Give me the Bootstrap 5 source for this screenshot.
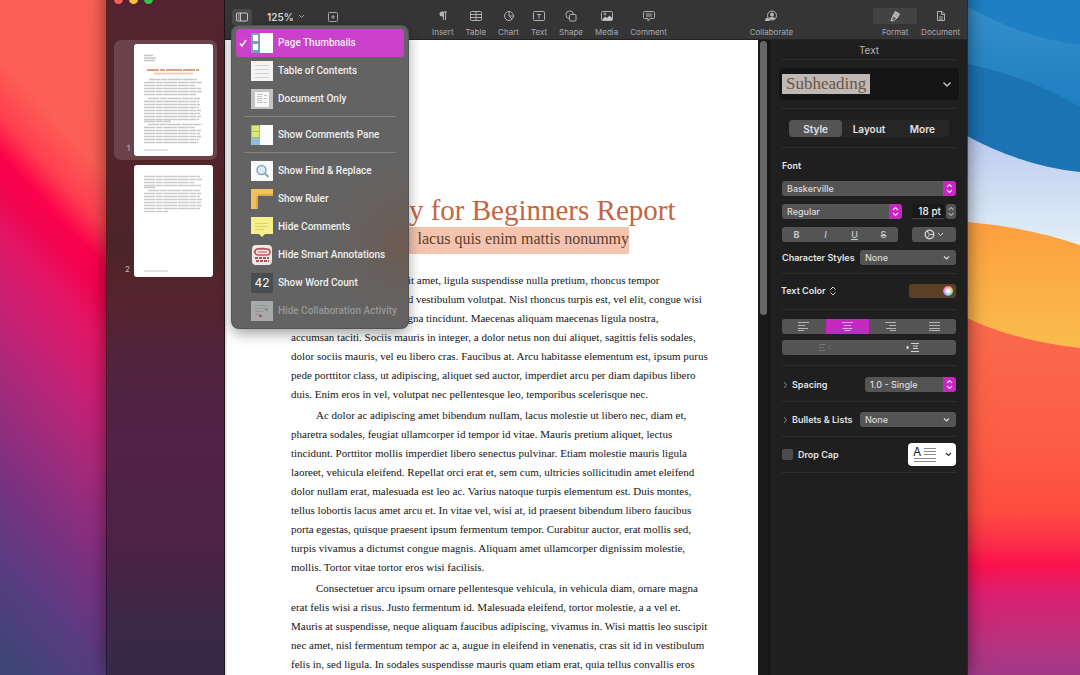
<!DOCTYPE html>
<html lang="en">
<head>
<meta charset="utf-8">
<meta name="viewport" content="width=device-width, initial-scale=1">
<title>Untitled</title>
<link href="https://cdn.jsdelivr.net/npm/bootstrap@5.3.0/dist/css/bootstrap.min.css" rel="stylesheet">
<style>
  :root { --accent: #c428c0; --ctl: #545454; --panel: #1f1f1f; --bar: #363536; }
  body { font-family: Inter, "Liberation Sans", sans-serif; font-size: 10px; line-height: 14px; background: #3b4478; }
  button { font: inherit; color: inherit; background: none; border: 0; padding: 0; }
  svg { display: block; flex: none; }
  .desktop { height: 100vh; }
  .wall-left { flex: 0 0 107px; background: linear-gradient(227deg, #fb6156 0, #fc5f56 22%, #ff3f50 29%, #fb024c 34%, #f2044f 38%, #e21765 44%, #cb1f73 52%, #a62a7a 62%, #7b3180 74%, #5a3c80 85%, #3f4478 97%); }
  .wall-right { flex: 0 0 113px; }
  .wall-right svg { width: 100%; height: 100%; }
  .app { margin-top: -12px; z-index: 1; box-shadow: 0 0 18px rgba(0,0,0,.55); outline: 1px solid rgba(20,15,18,.6); }

  .side { flex: 0 0 118px; border-right: 1px solid #1c1416; background: linear-gradient(#53242f 0, #54242c 20%, #4c2527 38%, #55242d 45%, #502340 56%, #522247 66%, #4f2146 80%, #3c2846 92%, #352a48 100%); }
  .lights { height: 22px; padding-left: 7px; gap: 6px; }
  .lights i { width: 9px; height: 9px; border-radius: 50%; }
  .l-close { background: #f5605c; }
  .l-min { background: #f6be40; }
  .l-max { background: #35c04b; }
  .thumbs { padding: 30px 7px 0; gap: 1px; }
  .thumb { padding: 4px; border-radius: 7px; gap: 4px; color: #cbb6b8; font-size: 8px; }
  .thumb.on { background: rgba(255,255,255,.14); }
  .thumb > span { line-height: 16px; }
  .sheet { width: 79px; height: 112px; background: #fff; border-radius: 3px; }

  .bar { background: var(--bar); border-bottom: 1px solid #222; color: #a9a8a9; font-size: 8px; }
  .bar-title { height: 18px; font-size: 10px; font-weight: 600; color: #c4c4c4; }
  .tools { height: 33px; padding: 2px 7px 0; gap: 12px; }
  .tools-left { flex: 0 0 188px; height: 17px; }
  .tool { line-height: 12px; }
  .tool svg { height: 16px; margin-bottom: 2px; overflow: visible; }
  .collab { margin-right: 76px; }
  .tool-on svg { background: #444344; border-radius: 3px; margin-left: -8px; margin-right: -8px; width: 44px; }
  .viewbtn { width: 20px; height: 16px; border-radius: 3px; background: #4a494a; }
  .zoomsel { font-size: 10px; font-weight: 600; color: #d6d5d6; margin-left: 15px; }
  .addpage { margin-right: 82px; }

  .viewmenu.dropdown-menu { top: 18px; left: 0; width: 176px; min-width: 0; padding: 3px 4px 3px; border: 0; border-radius: 7px; font-family: Roboto, sans-serif; font-size: 10px; font-weight: 500;
    background: radial-gradient(ellipse 90px 90px at 100% 72%, #6e5a50 0, rgba(104,96,92,.5) 60%, rgba(102,102,102,0) 100%), #636363; box-shadow: 0 0 0 1px #525252, 0 5px 14px rgba(0,0,0,.4); color: #efefef; }
  .viewmenu .dropdown-item { height: 28px; padding: 0 0 0 3px; border-radius: 4px; color: #efefef; gap: 5px; font-weight: 500; }
  .viewmenu .dropdown-item.active { background: #cb41cb; }
  .viewmenu .dropdown-item.disabled { color: #979797; }
  .viewmenu .tick { width: 8px; margin-right: -1px; }
  .viewmenu .dropdown-divider { margin: 3px 8px 4px; border-color: #858585; opacity: 1; }

  .canvas { background: #fff; box-shadow: inset 2px 0 #e8e4e6; padding: 154px 50px 0 66px; font-family: "Liberation Serif", serif; color: #141414; }
  .canvas h1 { font-size: 29px; line-height: 33px; margin: 0; color: #c4653f; font-weight: 400; }
  .canvas h2 { font-size: 16px; line-height: 24px; margin: 0 0 17px; font-weight: 400; color: #5c4030; }
  .canvas mark { display: inline-block; padding: 0 0 3px; background: #f5c4ae; color: inherit; }
  .canvas p { font-size: 11px; line-height: 19px; margin: 0 0 2px; text-indent: 25px; white-space: nowrap; }
  .track { flex: 0 0 11px; background: #191919; padding: 1px 2px; }
  .track i { display: block; height: 274px; border-radius: 4px; background: #666; }

  .inspector { flex: 0 0 198px; background: var(--panel); border-left: 1px solid #111; color: #e2e2e2; padding: 0 11px 0 12px; font-size: 9px; font-weight: 500; }
  .inspector hr { margin: 0; border-color: #2e2e2e; opacity: 1; }
  .inspector label, .font-head, .text-color { font-weight: 600; }
  .ins-head { height: 19px; font-size: 10px; color: #b4b4b4; font-weight: 400; }
  .stylebox { height: 32px; background: #151515; border-radius: 4px; margin: 8px -3px; padding: 0 7px 0 3px; }
  .stylebox mark { font-family: "Liberation Serif", serif; font-size: 17px; line-height: 20px; font-weight: 400; background: #bfb8b4; color: #6b5646; padding: 0 4px; }
  .tabset { margin: 11px 7px 10px; height: 17px; background: #262626; border-radius: 4px; font-size: 10px; font-weight: 600; }
  .tabset button { flex: 1 1 0; border-radius: 4px; }
  .tabset .on { background: #545454; }
  .font-head { margin: 11px 0 8px; }
  .fonts { gap: 8px; margin-bottom: 8px; }
  .w-face { width: 120px; }
  .w-seg { width: 116px; }
  .w-gear { width: 44px; }
  .w-drop { width: 96px; }
  .w-space { width: 91px; }
  .gap-hair { gap: 2px; }
  .color-row { margin: 10px 0 11px; }
  .text-color { margin-left: -1px; }
  .align-row { margin-top: 9px; }
  .indent { margin: 6px 0 10px; }
  .prop { margin: 11px 0 9px; height: 15px; }
  .prop ~ .prop { margin-top: 10px; }
  .drop-row { margin: 6px 0; }
  .ctl { height: 15px; border-radius: 3px; background-color: var(--ctl); color: #dcdcdc; }
  .inspector select.ctl { appearance: none; border: 0; padding: 0 14px 0 5px; font: inherit; line-height: 15px; background-repeat: no-repeat; background-position: right center; }
  select.pop { background-image: url("data:image/svg+xml,%3Csvg xmlns='http://www.w3.org/2000/svg' width='13' height='15'%3E%3Crect width='13' height='15' fill='%23c428c0'/%3E%3Cpath d='M4 6l2.500-2.500L9 6M4 9l2.500 2.500L9 9' fill='none' stroke='%23f3d6f2' stroke-width='1.200'/%3E%3C/svg%3E"); }
  select.down { background-image: url("data:image/svg+xml,%3Csvg xmlns='http://www.w3.org/2000/svg' width='13' height='15'%3E%3Cpath d='M1 6.500l2.500 2.500L6 6.500' fill='none' stroke='%23ddd' stroke-width='1.200'/%3E%3C/svg%3E"); }
  .seg button { flex: 1 1 0; height: 15px; color: #c9c9c9; }
  .seg .on { background: var(--accent); }
  .size { width: 32px; height: 15px; border: 0; border-bottom: 1px solid #444; background: #191919; color: #eee; font: inherit; font-size: 10px; text-align: right; padding: 0 3px 0 0; border-radius: 0; }
  .well { width: 47px; height: 14px; border-radius: 3px; background: #5a4026; }
  .well i { width: 10px; height: 10px; border-radius: 50%; margin-right: 3px; background: radial-gradient(#fff 15%, rgba(255,255,255,0) 70%), conic-gradient(#f66, #fa5, #5d7, #5bf, #96f, #f5c, #f66); }
  .tickbox { appearance: none; width: 11px; height: 11px; border-radius: 2px; background: #4c4c4c; margin: 0 5px 0 0; }
  .dropcap { width: 48px; height: 23px; border-radius: 4px; background: #fff; }
</style>
</head>
<body>
<div class="desktop d-flex overflow-hidden">
  <div class="wall-left"></div>

  <div class="app d-flex flex-fill position-relative">
    <nav class="side" aria-label="Pages">
      <div class="lights d-flex align-items-center"><i class="l-close"></i><i class="l-min"></i><i class="l-max"></i></div>
      <div class="thumbs d-flex flex-column">
        <button class="thumb on d-flex align-items-end justify-content-end"><span>1</span>
          <span class="sheet"><svg width="79" height="112" fill="none" stroke="#c6c6c6" stroke-width="1.700">
            <path d="M10 11.500h9M10 14h12M10 16.500h11"/>
            <path d="M13 26h52" stroke="#dda084" stroke-width="2" stroke-dasharray="12 1 5 1 16 1"/><path d="M20 29.500h39" stroke="#edc4b2" stroke-width="1.500"/>
            <path stroke-dasharray="11 .6 7 .6 14 .6" d="M15 35.500h48M10 38.500h58M10 41.500h51M10 44.500h57M10 47.500h58M10 50.500h52M14 54.500h52M10 57.500h55M10 60.500h56M10 63.500h55M10 66.500h57M10 69.500h56M10 72.500h57M10 75.500h55M10 77.500h27M14 80.500h54M10 83.500h51M10 86.500h57M10 89.500h56M10 92.500h57M10 95.500h55M10 98.500h54"/><path stroke-width="1" d="M10 106h24"/></svg></span>
        </button>
        <button class="thumb d-flex align-items-end justify-content-end"><span>2</span>
          <span class="sheet"><svg width="79" height="112" fill="none" stroke="#c9c9c9" stroke-width="1.700">
            <path stroke-dasharray="11 .6 7 .6 14 .6" d="M10 11.500h56M10 14.500h58M10 17.500h50M10 20.500h57M10 22.500h12M14 25.500h52M10 28.500h57M10 31.500h56M10 34.500h58M10 37.500h57M10 40.500h58M10 43.500h56M10 46.500h24"/><path stroke-width="1" d="M10 106h24"/></svg></span>
        </button>
      </div>
    </nav>

    <div class="d-flex flex-column flex-fill">
      <header class="bar">
        <div class="bar-title text-center"><div>Untitled</div></div>
        <div class="tools d-flex align-items-start">
          <div class="tools-left d-flex align-items-center position-relative">
            <button class="viewbtn d-flex align-items-center justify-content-center" aria-label="View" aria-expanded="true">
              <svg width="12" height="10" fill="none" stroke="#c8c8c8"><rect x=".5" y="1" width="11" height="8" rx="1"/><path d="M4.500 1v8M2 3h1.500M2 5h1.500M2 7h1.500"/></svg></button>
            <button class="zoomsel d-flex align-items-center gap-1">125% <svg width="7" height="5" fill="none" stroke="#a8a8a8"><path d="M1 1l2.500 2.500L6 1"/></svg></button>
            <button class="addpage ms-auto" aria-label="Add Page"><svg width="10" height="10" fill="none" stroke="#a8a8a8"><rect x=".5" y=".5" width="9" height="9" rx="1"/><path d="M5 3v4M3 5h4"/></svg></button>
            <ul class="viewmenu dropdown-menu show">
              <li><a class="dropdown-item active d-flex align-items-center" href="#"><span class="tick"><svg width="8" height="8" fill="none" stroke="#fff" stroke-width="1.400"><path d="M1 4.500L3 7l4-6"/></svg></span><svg width="22" height="20"><path fill="#fff" d="M0 0h22v20H0z"/><path fill="#7d9fbd" d="M0 0h9v20H0z"/><path fill="#fff" d="M2 2h5v6H2zM2 11h5v6H2z"/></svg>Page Thumbnails</a></li>
              <li><a class="dropdown-item d-flex align-items-center" href="#"><span class="tick"></span><svg width="22" height="20"><path fill="#f4f4f4" d="M0 0h22v20H0z"/><path stroke="#cfcfcf" d="M4 4.500h14M4 8.500h14M4 12.500h14M4 16.500h14"/></svg>Table of Contents</a></li>
              <li><a class="dropdown-item d-flex align-items-center" href="#"><span class="tick"></span><svg width="22" height="20"><path fill="#c3c3c3" d="M0 0h22v20H0z"/><path fill="#f8f8f8" d="M4 3h14v15H4z"/><path stroke="#c5c5c5" d="M6 5.500h6M6 7.500h5M6 9.500h6M6 11.500h5M6 13.500h6M13 6.500h3M13 9.500h3M13 13.500h3"/></svg>Document Only</a></li>
              <li><hr class="dropdown-divider"></li>
              <li><a class="dropdown-item d-flex align-items-center" href="#"><span class="tick"></span><svg width="22" height="20"><path fill="#fbfbfb" d="M0 0h22v20H0z"/><path fill="#a9b86c" d="M0 0h9v20H0z"/><path fill="#dbe873" d="M1 1h7v5H1zM1 7h7v5H1z"/><path fill="#8ebfdb" d="M0 13h9v7H0z"/></svg>Show Comments Pane</a></li>
              <li><hr class="dropdown-divider"></li>
              <li><a class="dropdown-item d-flex align-items-center" href="#"><span class="tick"></span><svg width="22" height="20"><path fill="#f8fafa" d="M0 0h22v20H0z"/><circle cx="10.500" cy="9" r="4.500" fill="#dcebf2" stroke="#84aab9" stroke-width="1.500"/><path stroke="#84aab9" stroke-width="2" d="M14 12.500l3.500 3.500"/></svg>Show Find &amp; Replace</a></li>
              <li><a class="dropdown-item d-flex align-items-center" href="#"><span class="tick"></span><svg width="22" height="20"><path fill="#f2c060" d="M0 0h22v7H7v13H0z"/><path fill="#e0a848" d="M7 5h15v2H7zM5 7h2v13H5z"/></svg>Show Ruler</a></li>
              <li><a class="dropdown-item d-flex align-items-center" href="#"><span class="tick"></span><svg width="22" height="20"><path fill="#f7ee8c" d="M0 0h22v17h-8l-3 3-3-3H0z"/><path stroke="#ddd078" d="M4 6.500h13M4 9.500h13M4 12.500h9"/></svg>Hide Comments</a></li>
              <li><a class="dropdown-item d-flex align-items-center" href="#"><span class="tick"></span><svg width="22" height="20" fill="none"><rect x="1" width="20" height="20" rx="4" fill="#f1e6e5"/><rect x="4" y="4" width="15" height="6" rx="3" stroke="#c4545a" stroke-width="1.500"/><path stroke="#c4545a" d="M3 8c0-6 16-6 16-1M7 7h9" stroke-width="1.200"/><path stroke="#a4575b" stroke-width="2" stroke-dasharray="3 1" d="M4 13h14M5 16h13"/></svg>Hide Smart Annotations</a></li>
              <li><a class="dropdown-item d-flex align-items-center" href="#"><span class="tick"></span><svg width="22" height="20" font-family="Inter"><path fill="#474d52" d="M0 0h22v20H0z"/><text x="11" y="14" font-size="12" font-weight="400" fill="#fff" text-anchor="middle">42</text></svg>Show Word Count</a></li>
              <li><a class="dropdown-item disabled d-flex align-items-center" href="#" aria-disabled="true"><span class="tick"></span><svg width="22" height="20"><path fill="#a9a9a9" d="M0 0h22v20H0z"/><path stroke="#949494" d="M4 4.500h13M4 7.500h13M4 10.500h8M4 13.500h6"/><path stroke="#5f9a94" stroke-width="2" d="M14 9h3"/><path stroke="#b05058" stroke-width="2" d="M8 15h3"/></svg>Hide Collaboration Activity</a></li>
            </ul>
          </div>
          <button class="tool d-flex flex-column align-items-center"><svg width="16" viewBox="0 0 16 16" fill="#b4b4b4"><path d="M7 3.500h5v1h-1V12h-1V4.500H9V12H8V8.500H7a2.500 2.500 0 010-5z"/></svg>Insert</button>
          <button class="tool d-flex flex-column align-items-center"><svg width="16" viewBox="0 0 16 16" fill="none" stroke="#b0b0b0"><rect x="2.500" y="3.500" width="11" height="9" rx="1"/><path d="M2.500 6.500h11M2.500 9.500h11M8 3.500v9"/></svg>Table</button>
          <button class="tool d-flex flex-column align-items-center"><svg width="16" viewBox="0 0 16 16" fill="none" stroke="#b0b0b0"><circle cx="8" cy="8" r="4.500"/><path d="M8 3.500V8h4.500M8 8l3 3"/></svg>Chart</button>
          <button class="tool d-flex flex-column align-items-center"><svg width="16" viewBox="0 0 16 16" fill="none" stroke="#b0b0b0"><rect x="2.500" y="3.500" width="11" height="9" rx="1"/><path d="M6 6.500h4M8 6v4.500"/></svg>Text</button>
          <button class="tool d-flex flex-column align-items-center"><svg width="16" viewBox="0 0 16 16" fill="none" stroke="#b0b0b0"><rect x="6.500" y="6.500" width="6.500" height="6.500" rx="1"/><path d="M6.500 10.500A3.800 3.800 0 1110.500 6.500"/></svg>Shape</button>
          <button class="tool d-flex flex-column align-items-center"><svg width="16" viewBox="0 0 16 16" fill="none" stroke="#b0b0b0"><rect x="2.500" y="3.500" width="11" height="9" rx="1"/><path fill="#c8c8c8" stroke="none" d="M3 12l3-3.500 2 1.500 2.500-2.500L13 10v2z"/><circle cx="6" cy="6" r="1"/></svg>Media</button>
          <button class="tool d-flex flex-column align-items-center"><svg width="16" viewBox="0 0 16 16" fill="none" stroke="#b0b0b0"><path d="M3.500 3.500h9q1 0 1 1v5q0 1-1 1H9l-2 2.500v-2.500H3.500q-1 0-1-1v-5q0-1 1-1zM5 6h6M5 8h6"/></svg>Comment</button>
          <button class="tool collab d-flex flex-column align-items-center ms-auto"><svg width="16" viewBox="0 0 16 16" fill="none" stroke="#b8b8b8"><circle cx="9" cy="7.500" r="4.500"/><circle cx="9" cy="6.500" r="1.500" fill="#b8b8b8"/><path fill="#b8b8b8" d="M6 11c1-2.500 5-2.500 6 0z"/><path fill="#b8b8b8" stroke="none" d="M2 13c0-2.500 1-3 3-3.500l2 3.500z"/></svg>Collaborate</button>
          <button class="tool tool-on d-flex flex-column align-items-center"><svg viewBox="0 0 44 16" fill="none" stroke="#c6c6c6"><path fill="#a8a8a8" d="M20 7.500L22.500 3.500l4 2.500-2.500 4z"/><path d="M18 12.500l2-5 4 2.500-4 3zM18 12.500l3-3"/></svg>Format</button>
          <button class="tool d-flex flex-column align-items-center"><svg width="16" viewBox="0 0 16 16" fill="none" stroke="#b0b0b0"><path d="M4.500 3.500H9l2.500 2.500v6.500h-7zM8.500 3.500V6.500h3M6 9h4M6 11h4"/></svg>Document</button>
        </div>
      </header>

      <div class="d-flex flex-fill">
        <main class="canvas flex-fill">
          <div class="text-center">
            <h1>Geology for Beginners Report</h1>
            <h2><mark>Sed et&nbsp; lacus quis enim mattis nonummy</mark></h2>
          </div>
          <p>Lorem ipsum dolor sit amet, ligula suspendisse nulla pretium, rhoncus tempor<br>fermentum, enim integer ad vestibulum volutpat. Nisl rhoncus turpis est, vel elit, congue wisi<br>enim nunc ultricies sit, magna tincidunt. Maecenas aliquam maecenas ligula nostra,<br>accumsan taciti. Sociis mauris in integer, a dolor netus non dui aliquet, sagittis felis sodales,<br>dolor sociis mauris, vel eu libero cras. Faucibus at. Arcu habitasse elementum est, ipsum purus<br>pede porttitor class, ut adipiscing, aliquet sed auctor, imperdiet arcu per diam dapibus libero<br>duis. Enim eros in vel, volutpat nec pellentesque leo, temporibus scelerisque nec.</p>
          <p>Ac dolor ac adipiscing amet bibendum nullam, lacus molestie ut libero nec, diam et,<br>pharetra sodales, feugiat ullamcorper id tempor id vitae. Mauris pretium aliquet, lectus<br>tincidunt. Porttitor mollis imperdiet libero senectus pulvinar. Etiam molestie mauris ligula<br>laoreet, vehicula eleifend. Repellat orci erat et, sem cum, ultricies sollicitudin amet eleifend<br>dolor nullam erat, malesuada est leo ac. Varius natoque turpis elementum est. Duis montes,<br>tellus lobortis lacus amet arcu et. In vitae vel, wisi at, id praesent bibendum libero faucibus<br>porta egestas, quisque praesent ipsum fermentum tempor. Curabitur auctor, erat mollis sed,<br>turpis vivamus a dictumst congue magnis. Aliquam amet ullamcorper dignissim molestie,<br>mollis. Tortor vitae tortor eros wisi facilisis.</p>
          <p>Consectetuer arcu ipsum ornare pellentesque vehicula, in vehicula diam, ornare magna<br>erat felis wisi a risus. Justo fermentum id. Malesuada eleifend, tortor molestie, a a vel et.<br>Mauris at suspendisse, neque aliquam faucibus adipiscing, vivamus in. Wisi mattis leo suscipit<br>nec amet, nisl fermentum tempor ac a, augue in eleifend in venenatis, cras sit id in vestibulum<br>felis in, sed ligula. In sodales suspendisse mauris quam etiam erat, quia tellus convallis eros</p>
        </main>
        <div class="track"><i></i></div>

        <aside class="inspector">
          <div class="ins-head d-flex align-items-center justify-content-center">Text</div>
          <hr>
          <div class="stylebox d-flex align-items-center justify-content-between"><mark>Subheading</mark>
            <button aria-label="Paragraph styles"><svg width="10" height="7" fill="none" stroke="#c4c4c4" stroke-width="1.400"><path d="M1.500 1.500L5 5l3.500-3.500"/></svg></button></div>
          <hr>
          <div class="tabset d-flex"><button class="on">Style</button><button>Layout</button><button>More</button></div>
          <hr>
          <div class="font-head">Font</div>
          <div class="fonts d-flex flex-column">
            <select class="ctl pop w-100" aria-label="Font family"><option>Baskerville</option></select>
            <div class="d-flex justify-content-between">
              <select class="ctl pop w-face" aria-label="Typeface"><option>Regular</option></select>
              <div class="d-flex gap-hair"><input class="size" value="18 pt" aria-label="Font size"><button class="ctl" aria-label="Step size"><svg width="10" height="15" fill="none" stroke="#ddd"><path d="M2.500 6L5 3.500 7.500 6M2.500 9L5 11.500 7.500 9"/></svg></button></div>
            </div>
            <div class="d-flex justify-content-between">
              <div class="ctl seg w-seg d-flex"><button><b>B</b></button><button><i>I</i></button><button><u>U</u></button><button><s>S</s></button></div>
              <button class="ctl w-gear gap-hair d-flex align-items-center justify-content-center" aria-label="Advanced options"><svg width="11" height="11" fill="none" stroke="#d0d0d0"><circle cx="5.500" cy="5.500" r="4.300" stroke-width="1.400"/><path d="M5.500 5.500H10M5.500 5.500L3 1.800M5.500 5.500L3 9.200"/></svg><svg width="7" height="5" fill="none" stroke="#d0d0d0"><path d="M1 1l2.500 2.500L6 1"/></svg></button>
            </div>
            <div class="d-flex justify-content-between align-items-center"><label for="cs">Character Styles</label><select id="cs" class="ctl down w-drop"><option>None</option></select></div>
          </div>
          <hr>
          <div class="color-row d-flex justify-content-between align-items-center"><button class="text-color d-flex align-items-center gap-1">Text Color <svg width="6" height="10" fill="none" stroke="#ccc"><path d="M.5 3.500L3 1l2.500 2.500M.5 6.500L3 9l2.500-2.500"/></svg></button><button class="well d-flex align-items-center justify-content-end" aria-label="Color well"><i></i></button></div>
          <hr>
          <div class="ctl seg align-row d-flex overflow-hidden">
            <button aria-label="Left"><svg class="mx-auto" width="11" height="9" stroke="#b4b4b4"><path d="M0 .5h11M0 3.500h7M0 6.500h10M0 8.500h6"/></svg></button>
            <button class="on" aria-label="Center"><svg class="mx-auto" width="11" height="9" stroke="#e7a6e6"><path d="M0 .5h11M2 3.500h7M.5 6.500h10M2.500 8.500h6"/></svg></button>
            <button aria-label="Right"><svg class="mx-auto" width="11" height="9" stroke="#b4b4b4"><path d="M0 .5h11M4 3.500h7M1 6.500h10M5 8.500h6"/></svg></button>
            <button aria-label="Justify"><svg class="mx-auto" width="11" height="9" stroke="#b4b4b4"><path d="M0 .5h11M0 3.500h11M0 6.500h11M0 8.500h11"/></svg></button>
          </div>
          <div class="ctl seg indent d-flex"><button aria-label="Decrease indent"><svg class="mx-auto" width="13" height="9" stroke="#707070" fill="none"><path d="M0 1.500h7M0 4.500h5M0 7.500h7M12 2L9 4.500 12 7"/></svg></button><button aria-label="Increase indent"><svg class="mx-auto" width="13" height="9" stroke="#d5d5d5" fill="#d5d5d5"><path d="M5 .5h8M7 3h5M7 5.500h5M5 8.500h8M1 3l2 1.500L1 6z"/></svg></button></div>
          <hr>
          <div class="prop d-flex align-items-center"><svg width="10" height="8" fill="none" stroke="#8a8a8a"><path d="M2 1l2.500 3L2 7"/></svg><label for="sp" class="me-auto">Spacing</label><select id="sp" class="ctl pop w-space"><option>1.0 - Single</option></select></div>
          <hr>
          <div class="prop d-flex align-items-center"><svg width="10" height="8" fill="none" stroke="#8a8a8a"><path d="M2 1l2.500 3L2 7"/></svg><label for="bl" class="me-auto">Bullets &amp; Lists</label><select id="bl" class="ctl down w-drop"><option>None</option></select></div>
          <hr>
          <div class="drop-row d-flex align-items-center"><input class="tickbox" type="checkbox" id="dc"><label for="dc" class="me-auto">Drop Cap</label>
            <button class="dropcap d-flex align-items-center justify-content-center gap-2" aria-label="Drop cap style"><svg width="24" height="19" overflow="visible"><text x="0" y="11" font-size="12" font-weight="400" fill="#222">A</text><path stroke="#8a8a8a" d="M11 3.500h12M11 6.500h12M11 9.500h12M1 13.500h22M1 16.500h22"/></svg><svg width="7" height="5" fill="none" stroke="#333" stroke-width="1.200"><path d="M1 1l2.500 2.500L6 1"/></svg></button></div>
          <hr>
        </aside>
      </div>
    </div>
  </div>

  <div class="wall-right">
    <svg viewBox="0 0 112 675" preserveAspectRatio="none">
      <defs>
        <linearGradient id="g1" x1="0" y1="0" x2="0" y2="1"><stop stop-color="#3590cb"/><stop offset="1" stop-color="#1b7bbf"/></linearGradient>
        <linearGradient id="g2" x1="0" y1="0" x2="0" y2="1"><stop stop-color="#bccbf0"/><stop offset="1" stop-color="#e8f5f8"/></linearGradient>
        <linearGradient id="g3" x1="0" y1="0" x2="0" y2="1"><stop stop-color="#fd9f40"/><stop offset="1" stop-color="#fabf4e"/></linearGradient>
        <linearGradient id="g4" x1="0" y1="0" x2="0" y2="1"><stop stop-color="#fa6a4c"/><stop offset=".33" stop-color="#fc5e45"/><stop offset=".54" stop-color="#fe4d40"/><stop offset=".64" stop-color="#fb2a4a"/><stop offset=".69" stop-color="#fb114d"/><stop offset=".77" stop-color="#dc2070"/><stop offset=".92" stop-color="#b5337f"/><stop offset="1" stop-color="#a03a88"/></linearGradient>
      </defs>
      <path fill="#1e80c2" d="M0 0h112v120H0z"/>
      <path fill="url(#g1)" d="M0 6Q55 38 112 45v80H0z"/>
      <path fill="#1b73b3" d="M0 64Q60 76 112 107v80H0z"/>
      <path fill="url(#g2)" d="M0 136Q55 166 112 172v90H0z"/>
      <path fill="url(#g3)" d="M0 222Q60 227 112 245v115H0z"/>
      <path fill="url(#g4)" d="M0 318Q45 340 112 348v327H0z"/>
    </svg>
  </div>
</div>
<script src="https://cdn.jsdelivr.net/npm/bootstrap@5.3.0/dist/js/bootstrap.bundle.min.js"></script>
</body>
</html>
